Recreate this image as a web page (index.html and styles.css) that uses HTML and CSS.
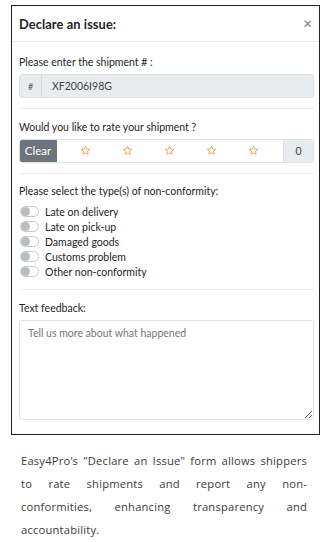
FILE: index.html
```html
<!DOCTYPE html>
<html lang="en">
<head>
  <meta charset="UTF-8" />
  <meta name="viewport" content="width=device-width, initial-scale=1.0" />
  <title>Declare an issue</title>
  <link rel="stylesheet" href="styles.css">
</head>
<body>
  <div class="shot">
    <div class="modal-header">
      <h5 class="modal-title">Declare an issue:</h5>
      <span class="close">&times;</span>
    </div>

    <div class="section first">
      <label class="label">Please enter the shipment # :</label>
      <div class="input-group">
        <span class="prepend">#</span>
        <span class="field">XF2006I98G</span>
      </div>
    </div>

    <div class="section">
      <label class="label">Would you like to rate your shipment ?</label>
      <div class="rating">
        <button class="clear">Clear</button>
        <div class="stars">
          <span class="star"><svg viewBox="0 0 24 24"><path d="M12 2.8l2.8 6 6.5.7-4.9 4.4 1.4 6.4L12 17l-5.8 3.3 1.4-6.4-4.9-4.4 6.5-.7z"/></svg></span>
          <span class="star"><svg viewBox="0 0 24 24"><path d="M12 2.8l2.8 6 6.5.7-4.9 4.4 1.4 6.4L12 17l-5.8 3.3 1.4-6.4-4.9-4.4 6.5-.7z"/></svg></span>
          <span class="star"><svg viewBox="0 0 24 24"><path d="M12 2.8l2.8 6 6.5.7-4.9 4.4 1.4 6.4L12 17l-5.8 3.3 1.4-6.4-4.9-4.4 6.5-.7z"/></svg></span>
          <span class="star"><svg viewBox="0 0 24 24"><path d="M12 2.8l2.8 6 6.5.7-4.9 4.4 1.4 6.4L12 17l-5.8 3.3 1.4-6.4-4.9-4.4 6.5-.7z"/></svg></span>
          <span class="star"><svg viewBox="0 0 24 24"><path d="M12 2.8l2.8 6 6.5.7-4.9 4.4 1.4 6.4L12 17l-5.8 3.3 1.4-6.4-4.9-4.4 6.5-.7z"/></svg></span>
        </div>
        <span class="count">0</span>
      </div>
    </div>

    <div class="section">
      <label class="label">Please select the type(s) of non-conformity:</label>
      <div class="switches">
        <div class="switch"><span class="track"></span>Late on delivery</div>
        <div class="switch"><span class="track"></span>Late on pick-up</div>
        <div class="switch"><span class="track"></span>Damaged goods</div>
        <div class="switch"><span class="track"></span>Customs problem</div>
        <div class="switch"><span class="track"></span>Other non-conformity</div>
      </div>
    </div>

    <div class="section last">
      <label class="label">Text feedback:</label>
      <textarea class="feedback" placeholder="Tell us more about what happened"></textarea>
    </div>
  </div>

  <p class="caption">Easy4Pro’s "Declare an Issue" form allows shippers<br>to rate shipments and report any non-<br>conformities, enhancing transparency and<br>accountability.</p>
</body>
</html>
```

FILE: styles.css
```css
body {
  margin: 0;
  background: #fff;
  font-family: Lato, "Open Sans", sans-serif;
}
.shot {
  margin: 5px 10px 0 11px;
  border: 1.5px solid #222;
  padding: 0 5px 14px 7px;
  color: #212529;
  font-size: 10.5px;
}
.modal-header {
  display: flex;
  align-items: center;
  justify-content: space-between;
  height: 35px;
  margin: 0 -5px 0 -7px;
  padding: 0 7px;
  border-bottom: 1px solid #e9ecef;
}
.modal-title {
  margin: 0;
  font-size: 12.8px;
  font-weight: 700;
  letter-spacing: 0.1px;
}
.close {
  color: #777;
  font-size: 15px;
  line-height: 1;
}
.section {
  padding: 9.5px 0 10px;
  border-bottom: 1px solid #e9ecef;
}
.section.first {
  padding-top: 12px;
}
.section.last {
  border-bottom: none;
  padding-bottom: 0;
}
.label {
  display: block;
  line-height: 16px;
  margin-bottom: 4px;
}
.input-group {
  display: flex;
  height: 24px;
  border: 1px solid #dadfe3;
  border-radius: 3px;
  background: #e9ecef;
  box-sizing: border-box;
}
.prepend {
  width: 21px;
  display: flex;
  align-items: center;
  justify-content: center;
  color: #555;
  font-size: 9px;
  border-right: 1px solid #d4d9dd;
}
.field {
  display: flex;
  align-items: center;
  padding-left: 10px;
  color: #444;
}
.rating {
  display: flex;
  height: 24px;
  border: 1px solid #dee2e6;
  border-radius: 3px;
  box-sizing: border-box;
  overflow: hidden;
}
.clear {
  width: 39px;
  border: none;
  margin: -1px 0 -1px -1px;
  background: #6c757d;
  color: #fff;
  font-family: inherit;
  font-size: 11.5px;
  padding: 0;
  border-radius: 3px 0 0 3px;
}
.stars {
  flex: 1;
  display: flex;
  padding: 0 8px;
}
.star {
  width: 42px;
  display: flex;
  align-items: center;
  justify-content: center;
}
.star svg {
  width: 11px;
  height: 11px;
  fill: none;
  stroke: #eba445;
  stroke-width: 2;
  stroke-linejoin: round;
}
.count {
  width: 30px;
  display: flex;
  align-items: center;
  justify-content: center;
  background: #e9ecef;
  border-left: 1px solid #dee2e6;
  color: #444;
}
.switches {
  padding-top: 1px;
}
.switch {
  display: flex;
  align-items: center;
  height: 15px;
}
.track {
  position: relative;
  width: 17px;
  height: 9px;
  border: 1px solid #c4c9ce;
  border-radius: 6px;
  margin: 0 6px 0 1px;
}
.track::after {
  content: "";
  position: absolute;
  left: 0;
  top: 0;
  width: 9px;
  height: 9px;
  border-radius: 50%;
  background: #b8bdc2;
}
.feedback {
  display: block;
  width: 100%;
  height: 100px;
  box-sizing: border-box;
  margin-top: 1px;
  border: 1px solid #dee2e6;
  border-radius: 3px;
  padding: 6px 8px;
  font-family: inherit;
  font-size: 10.5px;
  color: #212529;
  resize: vertical;
}
.feedback::placeholder {
  color: #777;
}
.caption {
  margin: 14px 23px 0 21px;
  font-family: "Open Sans", sans-serif;
  font-size: 11.2px;
  letter-spacing: 0.2px;
  line-height: 23px;
  text-align: justify;
  text-align-last: justify;
  color: #3a3a3a;
}
```
